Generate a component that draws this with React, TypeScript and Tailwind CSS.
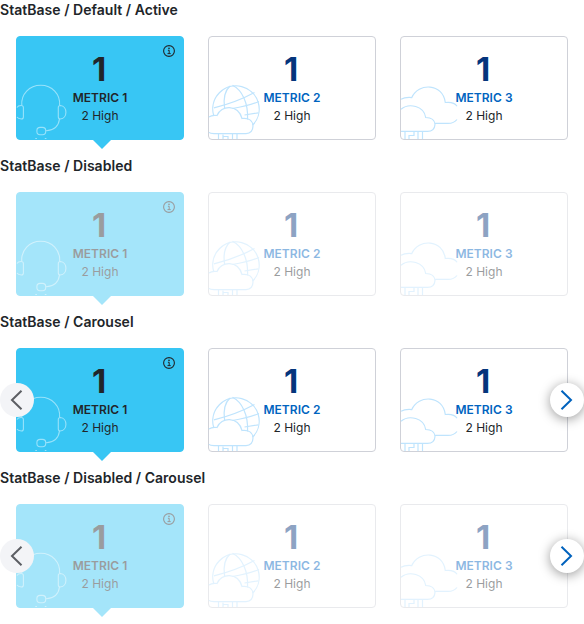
import React from "react";

function HeadsetArt() {
  return (
    <svg className="absolute -left-px -bottom-px" width="60" height="60" viewBox="16 80 60 60" fill="none" stroke="#98e2fa" strokeWidth="1.1">
      <path d="M21.800 105.500C20.800 94 29.500 85.300 40.700 85.300S60.600 94 59.600 105.500" />
      <path d="M58.300 107.500Q58.300 105.500 60.300 105.500C67.800 106 67.800 118.600 60.300 119Q58.300 119 58.300 117Z" />
      <path d="M17 107.500Q18 105.500 21 105.500Q23.400 105.500 23.400 107.500V117Q23.400 119 21.400 119Q18 118.800 17 117" />
      <path d="M59.500 119C58.500 126.500 53.500 130.500 46 130.700" />
      <rect x="36.900" y="127.400" width="8.800" height="7.400" rx="3.200" />
      <path d="M35.300 138.500h1.600M44.800 138.500h1.600" />
    </svg>
  );
}

function GlobeArt() {
  return (
    <svg className="absolute -left-px -bottom-px" width="60" height="60" viewBox="208 80 60 60" fill="none" stroke="#bfe4fd" strokeWidth="1.2">
      <path d="M213.600 115.200A23.200 23.200 0 1 1 252.600 125.200" />
      <path d="M230 86C224.500 91 223.200 99 224.600 108.500M232.500 85.300C242 90 248.500 103 247.500 119.500" />
      <path d="M214 107.800Q236 102.500 254.500 92.500M232.500 108.500Q248 106 259 101.500M244.500 115L258.500 112.800" />
      <path d="M209 117Q212 114.700 217 115.500C221 105 238 104 242 118.500Q252.500 117.500 253 126Q252.800 133.400 246 133.600H214Q210 133.400 209 132.400" />
      <path d="M218.500 134v5M223 139v-4.500M223 137.500q0-1 1-1h4v2.500M232.500 134v5M237 134v5" />
    </svg>
  );
}

function CloudArt() {
  return (
    <svg className="absolute -left-px -bottom-px" width="60" height="60" viewBox="400 80 60 60" fill="none" stroke="#bfe4fd" strokeWidth="1.2">
      <path d="M401 99.200Q405 97 411.800 97.600C418 82.500 443 83 445.300 102.500Q454 101.500 457 106.200M457 119.500Q454 123.400 448 123.400H435" />
      <path d="M401 109.300C409 102.500 424 106 425.700 117.500Q434.500 117.500 435 124.500Q434.500 131.400 427.500 131.400H401" />
      <path d="M405 132v7M409 139v-3.500h5v-4M418 139v-7M422.500 139v-7" />
    </svg>
  );
}

function InfoIcon() {
  return (
    <svg className="absolute right-2 top-2" width="12" height="12" viewBox="0 0 12 12" fill="none" stroke="#212529">
      <circle cx="6" cy="6" r="5.400" strokeWidth="1.100" />
      <path d="M4.900 5.300H6.200V8.500M4.500 8.600H7.700" strokeWidth="1" />
      <circle cx="6" cy="3.400" r=".8" fill="#212529" stroke="none" />
    </svg>
  );
}

function Stat({ n, disabled }: { n: number; disabled: boolean }) {
  const active = n === 1;
  return (
    <div
      className={`relative flex h-[104px] w-[168px] shrink-0 flex-col items-center rounded border pt-[14px] ${
        active ? "border-[#38c6f4] bg-[#38c6f4]" : "border-[#cfd1d8] bg-white"
      } ${disabled ? "opacity-45" : ""}`}
    >
      {n === 1 && <HeadsetArt />}
      {n === 2 && <GlobeArt />}
      {n === 3 && <CloudArt />}
      <div className={`relative mr-0.5 text-[33px] leading-[36px] font-bold ${active ? "text-[#212529]" : "text-[#05357c]"}`}>1</div>
      <div className={`relative mt-0.5 text-xs leading-[18px] font-semibold tracking-[0.04px] ${active ? "text-[#212529]" : "text-[#0064bf]"}`}>
        METRIC {n}
      </div>
      <div className="relative text-xs leading-[18px] text-[#212529]">2 High</div>
      {active && <InfoIcon />}
      {active && (
        <div className="absolute left-[75px] top-[102px] h-[10px] w-[20px] bg-[#38c6f4] [clip-path:polygon(0_0,100%_0,50%_100%)]" />
      )}
    </div>
  );
}

function Arrow({ next }: { next?: boolean }) {
  return (
    <button
      className={`absolute top-[35px] flex size-[34px] items-center justify-center rounded-full ${
        next ? "left-[550px] bg-white shadow-[0_2px_12px_rgba(0,0,0,0.4)]" : "left-0 bg-[#f3f4f7]"
      }`}
    >
      <svg width="34" height="34" viewBox="0 0 34 34" fill="none" strokeWidth="2" stroke={next ? "#0062bd" : "#5c5e63"}>
        <path d={next ? "M11.500 7.800L21 17L11.500 26.200" : "M21.500 7.800L12 17L21.500 26.200"} />
      </svg>
    </button>
  );
}

function Section({ title, disabled = false, carousel = false }: { title: string; disabled?: boolean; carousel?: boolean }) {
  return (
    <section className="h-[156px]">
      <h2 className="text-sm leading-5 font-semibold tracking-[0.03px] text-[#212529]">{title}</h2>
      <div className="relative mt-4 flex gap-6 pl-4">
        <Stat n={1} disabled={disabled} />
        <Stat n={2} disabled={disabled} />
        <Stat n={3} disabled={disabled} />
        {carousel && <Arrow />}
        {carousel && <Arrow next />}
      </div>
    </section>
  );
}

export default function App() {
  return (
    <main className="h-[624px] w-[584px] overflow-hidden bg-white font-['Inter',sans-serif]">
      <Section title="StatBase / Default / Active" />
      <Section title="StatBase / Disabled" disabled />
      <Section title="StatBase / Carousel" carousel />
      <Section title="StatBase / Disabled / Carousel" disabled carousel />
    </main>
  );
}
